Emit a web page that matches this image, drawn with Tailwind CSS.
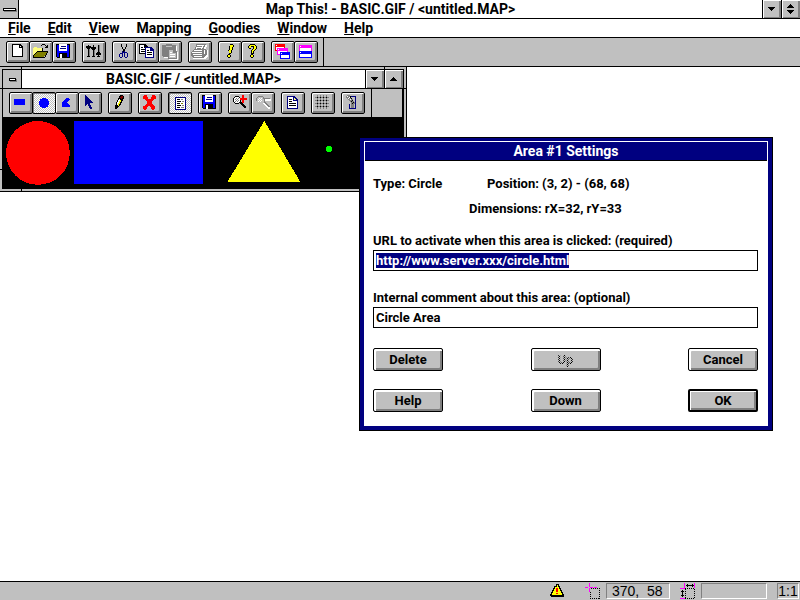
<!DOCTYPE html>
<html lang="en">
<head>
    <meta charset="UTF-8">
    <meta name="viewport" content="width=device-width, initial-scale=1.0">
    <title>Map This! - BASIC.GIF / &lt;untitled.MAP&gt;</title>
    <script src="https://cdn.jsdelivr.net/npm/@tailwindcss/browser@4"></script>
</head>
<body class="relative flex h-screen flex-col overflow-hidden bg-white font-['Roboto','Liberation_Sans',sans-serif] text-black">

<!-- Shared drawings -->
<svg class="hidden">
    <symbol id="floppy" viewBox="1 1 22 20">
        <path d="M4 3h14v14H5l-1-1z" fill="#000"/>
        <path d="M5 4h12v12H5z" fill="#00f"/>
        <path d="M7 3h8v7H7z" fill="#fff"/>
        <path d="M9 5h5v1H9zM8 7h6v1H8z" fill="#000080"/>
        <path d="M7 12h8v5H7z" fill="#000"/>
        <path d="M8 13h2v4H8z" fill="#fff"/>
    </symbol>
</svg>

<header class="flex h-[19px] shrink-0 border-b border-black">
    <button aria-label="System menu" class="flex w-[19px] items-center justify-center border-r border-black bg-[#c0c0c0]">
        <span class="h-[3px] w-[13px] border border-black bg-white shadow-[1px_1px_0_#808080]"></span>
    </button>
    <h1 class="flex-1 text-center text-sm leading-[18px] font-bold">Map This! - BASIC.GIF / &lt;untitled.MAP&gt;</h1>
    <button aria-label="Minimize" class="flex w-[19px] items-center justify-center border-l border-black bg-[#c0c0c0] shadow-[inset_1px_1px_0_#fff,inset_-2px_-1px_0_#808080]">
        <svg class="h-4 w-4" viewBox="0 0 16 16" shape-rendering="crispEdges"><path d="M4 6h7v1H4zM5 7h5v1H5zM6 8h3v1H6zM7 9h1v1H7z"/></svg>
    </button>
    <button aria-label="Restore" class="flex w-[19px] items-center justify-center border-l border-black bg-[#c0c0c0] shadow-[inset_1px_1px_0_#fff,inset_-2px_-1px_0_#808080]">
        <svg class="h-4 w-4" viewBox="0 0 16 16" shape-rendering="crispEdges"><path d="M7 3h1v1H7zM6 4h3v1H6zM5 5h5v1H5zM4 6h7v1H4zM4 9h7v1H4zM5 10h5v1H5zM6 11h3v1H6zM7 12h1v1H7z"/></svg>
    </button>
</header>

<nav class="flex h-[19px] shrink-0 gap-px border-b border-black text-sm leading-[18px] font-bold">
    <button class="px-2"><span class="underline">F</span>ile</button>
    <button class="px-2"><span class="underline">E</span>dit</button>
    <button class="px-2"><span class="underline">V</span>iew</button>
    <button class="px-2">Mapping</button>
    <button class="px-2"><span class="underline">G</span>oodies</button>
    <button class="px-2"><span class="underline">W</span>indow</button>
    <button class="px-2"><span class="underline">H</span>elp</button>
</nav>

<div class="flex h-[29px] shrink-0 border-b border-black bg-[#c0c0c0]">
    <div class="flex items-center gap-[6px] border-r border-black pr-[5px] pl-[6px]">
        <div class="flex -space-x-px">
            <button aria-label="New" class="h-[22px] w-6 rounded-xs border border-black bg-[#c0c0c0] shadow-[inset_1px_1px_0_#fff,inset_-2px_-2px_0_#808080]">
                <svg class="h-5 w-[22px]" viewBox="1 1 22 20" shape-rendering="crispEdges">
                    <path d="M6 3h8l3 3v10H6z"/><path d="M7 4h6v3h3v8H7z" fill="#fff"/><path d="M14 5h1v1h-1z" fill="#fff"/>
                </svg>
            </button>
            <button aria-label="Open" class="h-[22px] w-6 rounded-xs border border-black bg-[#c0c0c0] shadow-[inset_1px_1px_0_#fff,inset_-2px_-2px_0_#808080]">
                <svg class="h-5 w-[22px]" viewBox="1 1 22 20" shape-rendering="crispEdges">
                    <path d="M4 7h1V6h3v1h6v3h5v1l-4 5H4z" fill="#808000"/>
                    <path d="M4 7h1V6h3v1h6v3H9l-5 6z" fill="#ffff80"/>
                    <path d="M8 10h11v1H8zM7 11h1v1H7zM6 12h1v1H6zM5 13h1v1H5zM4 14h1v2h11v1H4zM16 14h1v2h-1zM17 12h1v2h-1zM18 11h1v1h-1zM13 7h1v3h-1z"/>
                    <path d="M12 4h1v1h-1zM13 3h3v1h-3zM16 4h1v1h-1zM18 4h1v3h-3V6h1V5h1z"/>
                </svg>
            </button>
            <button aria-label="Save" class="h-[22px] w-6 rounded-xs border border-black bg-[#c0c0c0] shadow-[inset_1px_1px_0_#fff,inset_-2px_-2px_0_#808080]">
                <svg class="h-5 w-[22px]" shape-rendering="crispEdges"><use href="#floppy"/></svg>
            </button>
        </div>
        <button aria-label="Preferences" class="h-[22px] w-6 rounded-xs border border-black bg-[#c0c0c0] shadow-[inset_1px_1px_0_#fff,inset_-2px_-2px_0_#808080]">
            <svg class="h-5 w-[22px]" viewBox="1 1 22 20" shape-rendering="crispEdges">
                <path d="M6 4h1v12H6zM11 4h1v12h-1zM16 4h1v12h-1z"/>
                <path d="M7 8h1v8H7zM12 9h1v7h-1zM17 4h1v7h-1z" fill="#808080"/>
                <path d="M4 5h5v2H4zM5 7h3v1H5zM9 6h5v2H9zM10 8h3v1h-3zM14 12h5v2h-5zM15 11h3v1h-3zM5 15h3v1H5zM10 15h3v1h-3zM15 15h3v1h-3z"/>
            </svg>
        </button>
        <div class="flex -space-x-px">
            <button aria-label="Cut" class="h-[22px] w-6 rounded-xs border border-black bg-[#c0c0c0] shadow-[inset_1px_1px_0_#fff,inset_-2px_-2px_0_#808080]">
                <svg class="h-5 w-[22px]" viewBox="1 1 22 20" shape-rendering="crispEdges">
                    <path d="M9 3h1v3H9zM10 6h1v2h-1zM14 3h1v3h-1zM13 6h1v2h-1zM11 8h2v3h-2z"/>
                    <path d="M10 10h1v1h1v-1h1v1h2v1h1v4h-1v1h-2v-1h-1v-4h-1v4h-1v1H8v-1H7v-3h1v-1h2zM8 13v3h2v-3zM13 12v4h2v-4z" fill="#000080" fill-rule="evenodd"/>
                </svg>
            </button>
            <button aria-label="Copy" class="h-[22px] w-6 rounded-xs border border-black bg-[#c0c0c0] shadow-[inset_1px_1px_0_#fff,inset_-2px_-2px_0_#808080]">
                <svg class="h-5 w-[22px]" viewBox="1 1 22 20" shape-rendering="crispEdges">
                    <path d="M4 3h6l3 3v7H4z"/><path d="M5 4h4v3h3v5H5z" fill="#fff"/>
                    <path d="M6 6h2v1H6zM6 8h4v1H6zM6 10h4v1H6z"/>
                    <path d="M10 6h6l3 3v8h-9z" fill="#000080"/><path d="M11 7h4v3h3v6h-7z" fill="#fff"/>
                    <path d="M12 9h2v1h-2zM12 11h5v1h-5zM12 13h5v1h-5z" fill="#000"/>
                </svg>
            </button>
            <button aria-label="Paste" class="h-[22px] w-6 rounded-xs border border-black bg-[#c0c0c0] shadow-[inset_1px_1px_0_#fff,inset_-2px_-2px_0_#808080]">
                <svg class="h-5 w-[22px]" viewBox="1 1 22 20" shape-rendering="crispEdges">
                    <path d="M5 5h14v6h-1v6H6v-1H5z" fill="#fff"/>
                    <path d="M4 4h4V3h6v1h4v12H5v-1H4z" fill="#808080"/>
                    <path d="M8 5h6v1H8z" fill="#c0c0c0"/>
                    <path d="M11 9h6l3 3v7h-9z" fill="#fff"/>
                    <path d="M10 8h6l3 3v7h-9z" fill="#808080"/>
                    <path d="M11 9h4v3h3v5h-7z" fill="#c0c0c0"/>
                    <path d="M12 11h2v1h-2zM12 13h5v1h-5zM12 15h5v1h-5z" fill="#fff"/>
                </svg>
            </button>
        </div>
        <button aria-label="Print" class="h-[22px] w-6 rounded-xs border border-black bg-[#c0c0c0] shadow-[inset_1px_1px_0_#fff,inset_-2px_-2px_0_#808080]">
            <svg class="h-5 w-[22px]" viewBox="1 1 22 20" shape-rendering="crispEdges">
                <path d="M9 4h10v2h-1v3h2v6l-3 3H5v-2H4v-4l4-3z" fill="#fff"/>
                <path d="M8 3h10v1h-1v2h-1v2h2v1h1v5h-1v1h-1v1h-1v1H5v-1H4v-1H3v-4h1v-1h1V9h1V8h1V6h1z" fill="#808080"/>
                <path d="M9 4h7l-2 4H8z" fill="#fff"/>
                <path d="M9 5h5v1H9zM9 7h4v1H9z" fill="#808080"/>
                <path d="M6 9h8v1H6zM4 11h10v1H4zM5 13h9v1H5zM6 15h8v1H6zM16 9h1v4h-1z" fill="#fff"/>
            </svg>
        </button>
        <div class="flex -space-x-px">
            <button aria-label="About" class="h-[22px] w-6 rounded-xs border border-black bg-[#c0c0c0] shadow-[inset_1px_1px_0_#fff,inset_-2px_-2px_0_#808080]">
                <svg class="h-5 w-[22px]" viewBox="1 1 22 20" shape-rendering="crispEdges">
                    <path d="M12 3h3v1h1v2h-1v3h-1v3h-1v1h-2v-3h-1V9h1V5h1zM10 13h2v1h1v2h-1v1h-2v-1H9v-2h1z"/>
                    <path d="M12 4h3v2h-1v3h-1v3h-2V9h1zM10 14h2v2h-2z" fill="#ff0"/>
                </svg>
            </button>
            <button aria-label="Help contents" class="h-[22px] w-6 rounded-xs border border-black bg-[#c0c0c0] shadow-[inset_1px_1px_0_#fff,inset_-2px_-2px_0_#808080]">
                <svg class="h-5 w-[22px]" viewBox="1 1 22 20" shape-rendering="crispEdges">
                    <path d="M9 3h5v1h1v1h1v3h-1v1h-1v1h-1v3h-3V9h1V8h1V6h-2v2H8V7H7V5h1V4h1zM10 13h2v1h1v2h-1v1h-2v-1H9v-2h1z"/>
                    <path d="M9 4h5v1h1v3h-1v1h-1v1h-1v2h-1V9h1V8h1V5h-3v2H8V5h1zM10 14h2v2h-2z" fill="#ff0"/>
                </svg>
            </button>
        </div>
        <div class="flex -space-x-px">
            <button aria-label="Cascade" class="h-[22px] w-6 rounded-xs border border-black bg-[#c0c0c0] shadow-[inset_1px_1px_0_#fff,inset_-2px_-2px_0_#808080]">
                <svg class="h-5 w-[22px]" viewBox="1 1 22 20" shape-rendering="crispEdges">
                    <path d="M4 3h10v7H4z" fill="#f00"/><path d="M5 6h8v3H5zM5 4h1v1H5z" fill="#fff"/>
                    <path d="M6 7h11v7H6z" fill="#f0f"/><path d="M7 10h9v3H7zM7 8h1v1H7z" fill="#fff"/>
                    <path d="M9 11h10v7H9z" fill="#00f"/><path d="M10 14h8v3h-8zM10 12h1v1h-1z" fill="#fff"/>
                </svg>
            </button>
            <button aria-label="Tile" class="h-[22px] w-6 rounded-xs border border-black bg-[#c0c0c0] shadow-[inset_1px_1px_0_#fff,inset_-2px_-2px_0_#808080]">
                <svg class="h-5 w-[22px]" viewBox="1 1 22 20" shape-rendering="crispEdges">
                    <path d="M5 4h13v7H5z" fill="#f0f"/><path d="M6 7h11v3H6zM6 5h1v1H6z" fill="#fff"/>
                    <path d="M5 10h13v7H5z" fill="#00f"/><path d="M6 13h11v3H6zM6 11h1v1H6z" fill="#fff"/>
                </svg>
            </button>
        </div>
    </div>
</div>

<main class="flex-1 bg-white"></main>

<footer class="flex h-[19px] shrink-0 items-center justify-end border-t border-black bg-[#c0c0c0] pr-px font-['Liberation_Sans',sans-serif] text-sm leading-[14px]">
    <svg class="mr-[19px] h-[14px] w-4" viewBox="0 0 16 14" shape-rendering="crispEdges">
        <path d="M6 0h3v2h1v2h1v2h1v2h1v2h1v3H1v-1H0v-2h1V8h1V6h1V4h1V2h2z"/>
        <path d="M7 1h1v2h1v2h1v2h1v2h1v2H2V9h1V7h1V5h1V3h2z" fill="#ff0"/>
        <path d="M6 4h2v4H6zM6 9h2v1H6z" fill="#f00"/>
    </svg>
    <svg class="mr-[5px] h-4 w-4" viewBox="0 0 16 16" shape-rendering="crispEdges">
        <path d="M4.500 0v4M4.500 5v4M0 4.500h3M5 4.500h3M9 4.500h3" stroke="#f0f" fill="none"/>
        <path d="M6 5.500h9M5 15.500h10M5.500 9v7M14.500 5v11" stroke="#000" stroke-dasharray="1 1" fill="none"/>
    </svg>
    <output class="h-4 w-16 border border-t-[#808080] border-r-white border-b-white border-l-[#808080] pl-[5px]">370, &nbsp;58</output>
    <svg class="mr-[5px] ml-[10px] h-4 w-4" viewBox="0 0 16 16" shape-rendering="crispEdges">
        <path d="M4.500 0v5M14.500 0v5M0 5.500h5M0 15.500h5" stroke="#f0f" fill="none"/>
        <path d="M6 2.500h8M7.500 1v3M12.500 1v3M2.500 7v7M1 8.500h3M1 12.500h3" stroke="#000" fill="none"/>
        <path d="M5 5.500h10M5 15.500h10M5.500 6v10M14.500 6v10" stroke="#000" stroke-dasharray="1 1" fill="none"/>
    </svg>
    <output class="mr-[10px] h-4 w-[66px] border border-t-[#808080] border-r-white border-b-white border-l-[#808080]"></output>
    <output class="h-4 w-[22px] border border-t-[#808080] border-r-white border-b-white border-l-[#808080] text-center">1:1</output>
</footer>

<!-- Document window -->
<section class="absolute top-[67px] left-0 w-[407px] border-r border-b border-black bg-[#c0c0c0] p-[2px]">
    <!-- frame corner notches -->
    <i class="absolute top-0 left-[21px] h-[2px] w-px bg-black"></i>
    <i class="absolute top-0 left-[384px] h-[2px] w-px bg-black"></i>
    <i class="absolute bottom-0 left-[21px] h-[2px] w-px bg-black"></i>
    <i class="absolute top-[21px] left-0 h-px w-[2px] bg-black"></i>
    <i class="absolute top-[21px] right-0 h-px w-[2px] bg-black"></i>
    <i class="absolute top-[102px] left-0 h-px w-[2px] bg-black"></i>
    <div class="border border-b-0 border-black">
        <header class="flex h-[19px] border-b border-black bg-white">
            <button aria-label="Document menu" class="flex w-[19px] items-center justify-center border-r border-black bg-[#c0c0c0]">
                <span class="h-[3px] w-[7px] border border-black bg-white shadow-[1px_1px_0_#808080]"></span>
            </button>
            <h2 class="flex-1 text-center text-sm leading-[18px] font-bold">BASIC.GIF / &lt;untitled.MAP&gt;</h2>
            <button aria-label="Minimize document" class="flex w-[19px] items-center justify-center border-l border-black bg-[#c0c0c0] shadow-[inset_1px_1px_0_#fff,inset_-2px_-1px_0_#808080]">
                <svg class="h-4 w-4" viewBox="0 0 16 16" shape-rendering="crispEdges"><path d="M4 6h7v1H4zM5 7h5v1H5zM6 8h3v1H6zM7 9h1v1H7z"/></svg>
            </button>
            <button aria-label="Maximize document" class="flex w-[19px] items-center justify-center border-l border-black bg-[#c0c0c0] shadow-[inset_1px_1px_0_#fff,inset_-2px_-1px_0_#808080]">
                <svg class="h-4 w-4" viewBox="0 0 16 16" shape-rendering="crispEdges"><path d="M7 6h1v1H7zM6 7h3v1H6zM5 8h5v1H5zM4 9h7v1H4z"/></svg>
            </button>
        </header>
        <div class="flex h-7">
            <div class="flex items-center gap-[6px] border-r border-black pr-[6px] pl-[6px]">
                <div class="flex -space-x-px">
                    <button aria-label="Rectangle" class="h-[22px] w-6 rounded-xs border border-black bg-[#c0c0c0] shadow-[inset_1px_1px_0_#fff,inset_-2px_-2px_0_#808080]">
                        <svg class="h-5 w-[22px]" viewBox="1 1 22 20" shape-rendering="crispEdges"><path d="M5 7h11v6H5z" fill="#00f"/></svg>
                    </button>
                    <button aria-label="Circle" aria-pressed="true" class="h-[22px] w-6 rounded-xs border border-black bg-[repeating-conic-gradient(#fff_0_25%,#c0c0c0_0_50%)] bg-[length:2px_2px] shadow-[inset_1px_1px_0_#808080]">
                        <svg class="h-5 w-[22px]" viewBox="1 1 22 20" shape-rendering="crispEdges"><circle cx="12" cy="11" r="5" fill="#00f"/></svg>
                    </button>
                    <button aria-label="Polygon" class="h-[22px] w-6 rounded-xs border border-black bg-[#c0c0c0] shadow-[inset_1px_1px_0_#fff,inset_-2px_-2px_0_#808080]">
                        <svg class="h-5 w-[22px]" viewBox="1 1 22 20" shape-rendering="crispEdges"><path d="M11 6h3v1h1v1h-1v1h-1v1h-1v1h1v1h1v1h1v2H7v-5h1V9h1V8h1V7h1z" fill="#00f"/></svg>
                    </button>
                    <button aria-label="Select" class="h-[22px] w-6 rounded-xs border border-black bg-[#c0c0c0] shadow-[inset_1px_1px_0_#fff,inset_-2px_-2px_0_#808080]">
                        <svg class="h-5 w-[22px]" viewBox="1 1 22 20" shape-rendering="crispEdges"><path d="M7 3h1v1h1v1h1v1h1v1h1v1h1v1h1v1h1v1h-3v2h1v2h1v2h-2v-1h-1v-2h-1v-2h-1v1H8v1H7z" fill="#000080"/></svg>
                    </button>
                </div>
                <button aria-label="Edit area" class="h-[22px] w-6 rounded-xs border border-black bg-[#c0c0c0] shadow-[inset_1px_1px_0_#fff,inset_-2px_-2px_0_#808080]">
                    <svg class="h-5 w-[22px]" viewBox="1 1 22 20" shape-rendering="crispEdges">
                        <path d="M12 3h3v1h1v3h-1v2h-1v2h-1v2h-1v1h-1v1h-1v1H9v1H7v-4h1v-3h1V8h1V6h1V4h1z"/>
                        <path d="M13 4h2v2h-1v1h-1V6h-1V5h1z" fill="#800000"/>
                        <path d="M11 7h1v2h-1v2h-1v2H9v-3h1V8h1z" fill="#fff"/>
                        <path d="M12 8h1v2h-1v2h-1v2h-1v-3h1V9h1z" fill="#ff0"/>
                    </svg>
                </button>
                <button aria-label="Delete area" class="h-[22px] w-6 rounded-xs border border-black bg-[#c0c0c0] shadow-[inset_1px_1px_0_#fff,inset_-2px_-2px_0_#808080]">
                    <svg class="h-5 w-[22px]" viewBox="1 1 22 20" shape-rendering="crispEdges"><path d="M6 3h3v2h1v2h3V5h1V3h3v1h1v3h-2v1h-1v1h-1v3h1v1h1v1h1v3h-1v1h-2v-1h-1v-2h-1v-1h-2v1H9v2H8v1H6v-1H5v-3h2v-1h1v-1h1V9H8V8H7V7H5V4h1z" fill="#f00"/></svg>
                </button>
                <button aria-label="Area list" aria-pressed="true" class="h-[22px] w-6 rounded-xs border border-black bg-[repeating-conic-gradient(#fff_0_25%,#c0c0c0_0_50%)] bg-[length:2px_2px] shadow-[inset_1px_1px_0_#808080]">
                    <svg class="h-5 w-[22px]" viewBox="1 1 22 20" shape-rendering="crispEdges">
                        <path d="M7 5h11v13H7z" fill="#000080"/><path d="M8 6h9v11H8z" fill="#fff"/>
                        <path d="M9 7h3v1H9zM9 9h4v1H9zM9 11h3v1H9zM9 13h4v1H9zM9 15h3v1H9z"/>
                        <path d="M13 7h2v1h-2zM14 9h2v1h-2zM14 13h2v1h-2zM13 15h3v1h-3z" fill="#808080"/>
                        <path d="M13 11h2v1h-2z" fill="#808000"/>
                    </svg>
                </button>
                <button aria-label="Save map" class="h-[22px] w-6 rounded-xs border border-black bg-[#c0c0c0] shadow-[inset_1px_1px_0_#fff,inset_-2px_-2px_0_#808080]">
                    <svg class="h-5 w-[22px]" shape-rendering="crispEdges"><use href="#floppy"/></svg>
                </button>
                <div class="flex -space-x-px">
                    <button aria-label="Zoom in" class="h-[22px] w-6 rounded-xs border border-black bg-[#c0c0c0] shadow-[inset_1px_1px_0_#fff,inset_-2px_-2px_0_#808080]">
                        <svg class="h-5 w-[22px]" viewBox="1 1 22 20" shape-rendering="crispEdges">
                            <path d="M7 4h4v1h1v1h1v4h1v1h1v1h1v1h1v1h1v2h-2v-1h-1v-1h-1v-1h-1v-1h-1v-1h-1v1H7v-1H6v-1H5V6h1V5h1z"/>
                            <path d="M7 5h4v1h1v4h-1v1H7v-1H6V6h1z" fill="#fff"/>
                            <path d="M8 6h1v1H8zM10 6h1v1h-1zM7 7h1v1H7zM9 7h1v1H9zM8 8h1v1H8zM10 8h1v1h-1zM7 9h1v1H7zM9 9h1v1H9z" fill="#808080"/>
                            <path d="M14 3h2v3h3v2h-3v3h-2V8h-2V6h2z" fill="#f00"/>
                        </svg>
                    </button>
                    <button aria-label="Zoom out" disabled class="h-[22px] w-6 rounded-xs border border-black bg-[#c0c0c0] shadow-[inset_1px_1px_0_#fff,inset_-2px_-2px_0_#808080]">
                        <svg class="h-5 w-[22px]" viewBox="1 1 22 20" shape-rendering="crispEdges">
                            <path d="M13 10h1v1h1v1h1v1h1v1h1v1h1v2h-2v-1h-1v-1h-1v-1h-1v-1h-1v-1h-1zM12 7h8v2h-8z" fill="#fff"/>
                            <path d="M7 4h5v1h1v1h1v4h1v1h1v1h1v1h1v1h1v1h-2v-1h-1v-1h-1v-1h-1v-1h-1v-1h-1v1H7v-1H6v-1H5V6h1V5h1z" fill="#808080"/>
                            <path d="M7 5h5v1h1v4h-1v1H7v-1H6V6h1z" fill="#c0c0c0"/>
                            <path d="M8 6h1v1H8zM10 6h1v1h-1zM7 7h1v1H7zM9 7h1v1H9zM8 8h1v1H8zM10 8h1v1h-1zM7 9h1v1H7zM9 9h1v1H9z" fill="#fff"/>
                            <path d="M12 6h7v1h-7z" fill="#808080"/>
                        </svg>
                    </button>
                </div>
                <button aria-label="Map info" class="h-[22px] w-6 rounded-xs border border-black bg-[#c0c0c0] shadow-[inset_1px_1px_0_#fff,inset_-2px_-2px_0_#808080]">
                    <svg class="h-5 w-[22px]" viewBox="1 1 22 20" shape-rendering="crispEdges">
                        <path d="M6 4h7l4 4v9H6z" fill="#000080"/><path d="M7 5h5v4h4v7H7z" fill="#fff"/>
                        <path d="M13 6l2 2h-2z" fill="#ffff80"/>
                        <path d="M8 7h3v1H8zM8 9h3v1H8zM8 11h7v1H8zM8 13h7v1H8z"/>
                    </svg>
                </button>
                <button aria-label="Grid" class="h-[22px] w-6 rounded-xs border border-black bg-[#c0c0c0] shadow-[inset_1px_1px_0_#fff,inset_-2px_-2px_0_#808080]">
                    <svg class="h-5 w-[22px]" viewBox="1 1 22 20" shape-rendering="crispEdges">
                        <path d="M4 5.500h14M4 8.500h14M4 11.500h14M4 14.500h14M6.500 3v14M9.500 3v14M12.500 3v14M15.500 3v14" stroke="#808080"/>
                        <path d="M6 5h1v1H6zM9 5h1v1H9zM12 5h1v1h-1zM15 5h1v1h-1zM6 8h1v1H6zM9 8h1v1H9zM12 8h1v1h-1zM15 8h1v1h-1zM6 11h1v1H6zM9 11h1v1H9zM12 11h1v1h-1zM15 11h1v1h-1zM6 14h1v1H6zM9 14h1v1H9zM12 14h1v1h-1zM15 14h1v1h-1z"/>
                    </svg>
                </button>
                <button aria-label="Close map" class="h-[22px] w-6 rounded-xs border border-black bg-[#c0c0c0] shadow-[inset_1px_1px_0_#fff,inset_-2px_-2px_0_#808080]">
                    <svg class="h-5 w-[22px]" viewBox="1 1 22 20" shape-rendering="crispEdges">
                        <path d="M9 4h6v13H8v-5h1v4h5V5H9z" fill="#000080"/>
                        <path d="M10 11h3v5h-3z" fill="#808080"/>
                        <path d="M6 3h3v1h1v2h1v1h1v2h1v1h1v2h-1v1h-1v-1h-1v-1h-1v-1H9V9H8V8H7V7H6V6H5V4h1z" fill="#808080"/>
                        <path d="M6 4h1v1H6zM8 5h1v1H8zM7 6h1v1H7zM9 7h1v1H9z" fill="#fff"/>
                        <path d="M9 4h1v2H9zM10 6h1v1h-1zM11 8h1v1h-1zM10 9h1v1h-1zM12 10h1v1h-1zM11 11h1v1h-1z"/>
                    </svg>
                </button>
            </div>
            <div class="flex-1 border-r border-black"></div>
        </div>
        <svg class="block h-[72px] w-full bg-black" viewBox="3 117 401 72" preserveAspectRatio="xMinYMin" shape-rendering="crispEdges">
            <circle cx="38" cy="153" r="32" fill="#f00"/>
            <path d="M74 121h130v63H74z" fill="#00f"/>
            <path d="M265 121L301 182H228z" fill="#ff0"/>
            <path d="M329 146h3v1h1v4h-1v1h-4v-1h-1v-4h1v-1z" fill="#0f0"/>
        </svg>
    </div>
</section>

<!-- Area settings -->
<section role="dialog" aria-labelledby="dialogTitle" class="absolute top-[137px] left-[359px] w-[414px] border border-black">
    <div class="border-4 border-t-[3px] border-[#000080] bg-white">
        <h2 id="dialogTitle" class="mx-px mt-px h-[19px] border-b border-black bg-[#000080] text-center text-sm leading-[18px] font-bold text-white">Area #1 Settings</h2>
        <form id="areaForm" class="pt-[15px] pr-[10px] pb-[14px] pl-[9px] text-[13px] leading-4 font-bold">
            <div class="flex">
                <p class="w-[114px]">Type: Circle</p>
                <p>Position: (3, 2) - (68, 68)</p>
            </div>
            <p class="mt-[9px] pl-24">Dimensions: rX=32, rY=33</p>
            <label for="areaUrl" class="mt-4 block">URL to activate when this area is clicked: (required)</label>
            <input id="areaUrl" name="areaUrl" type="text" required value="http://www.server.xxx/circle.html" class="mt-px block h-[21px] w-full border border-black px-[2px] pb-px leading-[15px] outline-none selection:bg-[#000080] selection:text-white">
            <label for="areaComment" class="mt-[19px] block">Internal comment about this area: (optional)</label>
            <input id="areaComment" name="areaComment" type="text" value="Circle Area" class="mt-px block h-[21px] w-full border border-black px-[2px] pb-px leading-[15px] outline-none">
            <div class="mt-5 grid grid-cols-[repeat(3,70px)] justify-between gap-y-[18px]">
                <button type="button" class="h-[23px] rounded-xs border border-black bg-[#c0c0c0] shadow-[inset_2px_2px_0_#fff,inset_-2px_-2px_0_#808080]">Delete</button>
                <button type="button" disabled class="h-[23px] rounded-xs border border-black bg-[#c0c0c0] shadow-[inset_2px_2px_0_#fff,inset_-2px_-2px_0_#808080]"><span class="bg-[repeating-conic-gradient(#000_0_25%,#c0c0c0_0_50%)] bg-[length:2px_2px] bg-clip-text text-transparent">Up</span></button>
                <button type="button" class="h-[23px] rounded-xs border border-black bg-[#c0c0c0] shadow-[inset_2px_2px_0_#fff,inset_-2px_-2px_0_#808080]">Cancel</button>
                <button type="button" class="h-[23px] rounded-xs border border-black bg-[#c0c0c0] shadow-[inset_2px_2px_0_#fff,inset_-2px_-2px_0_#808080]">Help</button>
                <button type="button" class="h-[23px] rounded-xs border border-black bg-[#c0c0c0] shadow-[inset_2px_2px_0_#fff,inset_-2px_-2px_0_#808080]">Down</button>
                <button type="submit" class="h-[23px] rounded-xs border-2 border-black bg-[#c0c0c0] shadow-[inset_1px_1px_0_#fff,inset_-2px_-2px_0_#808080]">OK</button>
            </div>
        </form>
    </div>
</section>

<script>
    const areaUrl = document.getElementById('areaUrl');
    areaUrl.focus();
    areaUrl.select();

    document.getElementById('areaForm').addEventListener('submit', (e) => {
        e.preventDefault();
    });
</script>
</body>
</html>
